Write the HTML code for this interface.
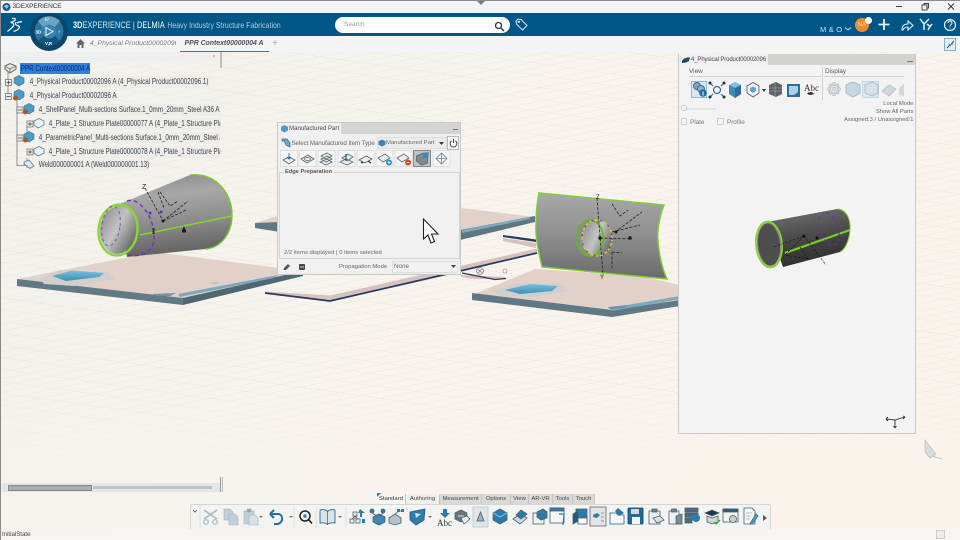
<!DOCTYPE html>
<html><head><meta charset="utf-8"><style>
*{box-sizing:border-box}
html,body{margin:0;padding:0;width:960px;height:540px;overflow:hidden;background:#f6f2ec;font-family:"Liberation Sans",sans-serif}
.a{position:absolute;white-space:nowrap}
.t{font-size:8px;color:#3c4146;line-height:12px;background:#eeedea;padding:0 1px;height:12px;overflow:hidden;transform:scaleX(.78);transform-origin:0 0}
.panel{position:absolute;background:#f0f0f0;border:1px solid #c8c8c8}
.gt{font-size:6.4px;color:#555}
.tab{position:absolute;top:493.500px;height:10.500px;font-size:5.900px;line-height:11px;text-align:center;color:#444;background:#d9d9d7;border-right:1px solid #c4c4c4}
</style></head><body>
<svg class="a" style="left:0;top:0" width="960" height="540" viewBox="0 0 960 540">
<defs>
<linearGradient id="bg" x1="0" y1="0" x2="1" y2="0.4"><stop offset="0" stop-color="#f3f2ed"/><stop offset=".5" stop-color="#f7f3ed"/><stop offset="1" stop-color="#f9f3ec"/></linearGradient>
<linearGradient id="cone" x1="0.35" y1="0" x2="0.5" y2="1"><stop offset="0" stop-color="#8d8d8d"/><stop offset=".25" stop-color="#a8a8a8"/><stop offset=".6" stop-color="#8b8b8b"/><stop offset="1" stop-color="#5d5d5d"/></linearGradient>
<linearGradient id="inner" x1="0" y1="0" x2="1" y2="0.6"><stop offset="0" stop-color="#858585"/><stop offset=".55" stop-color="#c4c4c4"/><stop offset="1" stop-color="#707070"/></linearGradient>
<linearGradient id="pl" x1="0" y1="0" x2="0" y2="1"><stop offset="0" stop-color="#a9a9a9"/><stop offset=".5" stop-color="#8e8e8e"/><stop offset="1" stop-color="#6b6b6b"/></linearGradient>
<linearGradient id="dark" x1="0.3" y1="0" x2="0.55" y2="1"><stop offset="0" stop-color="#6f6f6f"/><stop offset=".55" stop-color="#454545"/><stop offset="1" stop-color="#2c2c2c"/></linearGradient>
<linearGradient id="blue" x1="0" y1="0" x2="0" y2="1"><stop offset="0" stop-color="#79c0dc"/><stop offset="1" stop-color="#3d8fb3"/></linearGradient>
<pattern id="grid" width="80" height="140" patternUnits="userSpaceOnUse" patternTransform="matrix(1 .14 1 -.2 0 250)">
<path d="M20 0V140M40 0V140M60 0V140M0 35H80M0 70H80M0 105H80" stroke="#e6e3dc" stroke-width=".8" fill="none"/>
<path d="M0 0V140M0 0H80" stroke="#d6d3c9" stroke-width="1" fill="none"/>
</pattern>
<linearGradient id="fade" x1="0" y1="0" x2="0" y2="1"><stop offset="0" stop-color="#fff"/><stop offset=".72" stop-color="#fff"/><stop offset=".88" stop-color="#000"/></linearGradient>
<mask id="m"><rect width="960" height="540" fill="url(#fade)"/></mask>
</defs>
<rect width="960" height="540" fill="url(#bg)"/>
<rect width="960" height="540" fill="url(#grid)" mask="url(#m)"/>
<!-- left plate -->
<path d="M155 252L17 279L17 284L183 303L303 276L303 271Z" fill="#e1d1c9"/>
<path d="M17 279L17 286L183 305L183 298Z" fill="#617a85"/>
<path d="M183 298L303 271L303 276L183 305Z" fill="#4e6773"/>
<path d="M40 279L60 270L108 272L115 279L74 286L44 284Z" fill="#cfcfcd"/>
<path d="M52 276L72 270.500L104 273L99 277L66 281Z" fill="url(#blue)"/>
<path d="M178 294L278 275L274 278L180 297Z" fill="#7aa9bd"/>
<path d="M153 294L176 293L170 296L156 296Z" fill="#6c93a8"/>
<path d="M208 283L220 282L216 284Z" fill="#a9bcc2"/>
<!-- rear plate stub -->
<path d="M255 223L280 219L280 232L255 228Z" fill="#607985"/>
<path d="M255 223L280 215L280 222Z" fill="#e1d1c9"/>
<!-- mid plate -->
<path d="M460 208L535 217L460 231Z" fill="#e1d1c9"/>
<path d="M460 230L535 216L535 222L460 240Z" fill="#5d7681"/>
<path d="M462 230L530 217L530 219L462 233Z" fill="#7daabf"/>
<!-- connectors -->
<path d="M265 291.500L330 295.500L445 269.500L537 248.500L537 253L445 274L330 300L265 293Z" fill="#d6c1bf"/>
<path d="M265 293L330 301L445 274.500L537 253" fill="none" stroke="#28385f" stroke-width="1.700"/>
<path d="M503 238L536 243L536 248L503 241Z" fill="#d6c1bf"/>
<path d="M503 237L536 242L536 239.500L503 235Z" fill="#28385f"/>
<path d="M461 275L505 277L505 279L475 279L461 277Z" fill="#d6c1bf"/>
<path d="M462 273L495 279.500L506 278.500" stroke="#28385f" stroke-width="1.300" fill="none"/>
<circle cx="480" cy="271" r="3.500" fill="#eee" stroke="#888" stroke-width=".8"/><path d="M478 269L482 273M482 269L478 273" stroke="#777" stroke-width=".6"/>
<circle cx="505" cy="271" r="2" fill="#fff" stroke="#777" stroke-width=".6"/>
<!-- right plate -->
<path d="M535 269L472 295L472 300L612 314L680 303L680 285L640 276Z" fill="#e1d1c9"/>
<path d="M472 293L472 300L612 317L680 306L680 300L612 310Z" fill="#5f7883"/>
<path d="M494 291L520 283L560 284L570 291L530 297L500 296Z" fill="#cfcfcd"/>
<path d="M505 290L530 284L558 286L552 291L520 294Z" fill="url(#blue)"/>
<path d="M610 308L680 296L680 299L612 311Z" fill="#7aa9bd"/>
<path d="M608 307L628 305L624 308L610 309Z" fill="#6c93a8"/>
<!-- cone -->
<path d="M117 205L190 175C212 172 232 190 232 215C232 232 222 248 205 249L127 257Z" fill="url(#cone)"/>
<ellipse cx="118" cy="230" rx="18" ry="24" fill="url(#inner)" transform="rotate(6 118 230)"/>
<ellipse cx="118" cy="230" rx="19.500" ry="25.500" fill="none" stroke="#87d830" stroke-width="2.400" transform="rotate(6 118 230)"/>
<path d="M190 175C212 172 232 190 232 215C232 232 222 248 205 249" fill="none" stroke="#78c828" stroke-width="1.400"/>
<path d="M140 235L232 216" stroke="#86d42c" stroke-width="1.500"/>
<path d="M127 201C140 196 156 220 154 240C153 252 140 258 128 255" fill="none" stroke="#6d2bc0" stroke-width="1.300" stroke-dasharray="4 3"/>
<ellipse cx="111" cy="226" rx="9" ry="20" fill="none" stroke="#7d4bc8" stroke-width="1" stroke-dasharray="3 3" transform="rotate(8 111 226)"/>
<g stroke="#222" fill="none" stroke-width=".8" stroke-dasharray="3 1.500"><path d="M145 188L163 221M163 221L188 201M163 221L186 210M158 192L164 208M160 192L170 206L178 201"/></g>
<g fill="#1a1a1a"><circle cx="163" cy="221" r="1.500"/><path d="M182 231l2-5 2 5z"/><rect x="182" y="230" width="4" height="2.500"/><rect x="152.500" y="228" width="2" height="6" fill="#333"/></g>
<circle cx="150" cy="213" r="1.500" fill="#6d2bc0"/><circle cx="161" cy="212" r="1.500" fill="#6d2bc0"/>
<text x="142" y="189" font-size="7" font-family="Liberation Sans" fill="#222">Z</text>
<!-- panel tube -->
<path d="M539 193L664 205C659 218 657 232 658 240C659 255 662 268 667 279L542 267C538 250 535 235 536 223C536 212 537 203 539 193Z" fill="url(#pl)" stroke="#7ed030" stroke-width="1.400"/>
<ellipse cx="595" cy="238" rx="18" ry="18.500" fill="#8c8c8c"/>
<ellipse cx="597" cy="238" rx="15" ry="18" fill="url(#inner)"/>
<ellipse cx="590" cy="238" rx="13" ry="18" fill="none" stroke="#63ba1e" stroke-width="1.800"/>
<ellipse cx="597" cy="238" rx="15" ry="18" fill="none" stroke="#d6c83c" stroke-width="1.600" stroke-dasharray="3 2"/>
<ellipse cx="597" cy="238" rx="15" ry="18" fill="none" stroke="#6d2bc0" stroke-width="1.200" stroke-dasharray="2 7"/>
<g stroke="#222" fill="none" stroke-width=".8" stroke-dasharray="3 1.500"><path d="M597 198L603 275M600 238L632 239M615 232L642 212M612 204L620 216L628 210M612 232L640 225M612 252L622 253M612 252L612 268"/></g>
<g fill="#1a1a1a"><circle cx="600" cy="238" r="1.700"/><circle cx="630" cy="238" r="1.700"/><circle cx="616" cy="232" r="1.500"/></g>
<text x="596" y="199" font-size="6" fill="#222" font-family="Liberation Sans">Z</text><text x="600" y="279" font-size="6" fill="#222" font-family="Liberation Sans">Y</text>
<!-- misc at far right -->
<path d="M925 440L936 454L930 458L925 452Z" fill="#d8dcdc" stroke="#aeb4b4" stroke-width=".6"/><path d="M932 456L942 459" stroke="#c0c4c4"/>
</svg>

<!-- Title bar -->
<div class="a" style="left:0;top:0;width:960px;height:13px;background:#f1f5f9;border-top:1px solid #8a8a8a"></div>
<svg class="a" style="left:2px;top:2px" width="9" height="10"><circle cx="4.500" cy="5" r="4" fill="#1d5a86"/><path d="M2 4l2.500-1.500L7 4 4.500 7z" fill="#8fc6e2"/></svg>
<div class="a" style="left:12.500px;top:3px;font-size:6.500px;line-height:8px;color:#333;letter-spacing:-.1px">3DEXPERIENCE</div>
<svg class="a" style="left:476px;top:0" width="10" height="5"><path d="M1 1h8L5 5z" fill="#7d7d7d"/></svg>
<svg class="a" style="left:895px;top:2px" width="60" height="10" fill="none" stroke="#333" stroke-width=".9"><path d="M1 4.500H7"/><rect x="27" y="3" width="5" height="5"/><path d="M29 3V1.500H33.500V6H32"/><path d="M53 1.500L59 7.500M59 1.500L53 7.500"/></svg>

<!-- Blue bar -->
<div class="a" style="left:0;top:13px;width:960px;height:23px;background:#005685"></div>
<svg class="a" style="left:6px;top:16px" width="18" height="18" fill="none" stroke="#fff" stroke-width="1.200"><path d="M6 2.500C8 2 10 2.500 9 4C8 5.500 6 6 4.500 6.500C7.500 6.500 8.500 8.500 7 10.500C5.500 12.500 3 14 1.500 15.500"/><path d="M10 6C9 8 9.500 9 11.500 9.500C13.500 10 14 11.500 12.500 13C11 14.500 9 15 7.500 15.500"/><path d="M11 7C12.500 6 14.500 5.500 16 6"/></svg>
<div class="a" style="left:73px;top:20px;font-size:8.800px;line-height:11px;color:#dbe9f1;letter-spacing:.1px;transform:scaleX(.835);transform-origin:0 0"><b style="color:#fff">3D</b>EXPERIENCE | <span style="color:#fff">DELMIA</span> <span style="color:#b5d2e2;font-size:8.200px;letter-spacing:.08px;margin-left:1px">Heavy Industry Structure Fabrication</span></div>
<div class="a" style="left:335px;top:17px;width:175px;height:16px;background:#fff;border-radius:8px"></div>
<div class="a" style="left:344px;top:21px;font-size:6.500px;line-height:8px;color:#9b9b9b">Search</div>
<svg class="a" style="left:494px;top:21px" width="11" height="11" fill="none" stroke="#333" stroke-width="1.300"><circle cx="4.500" cy="4.500" r="3"/><path d="M7 7L10 10"/></svg>
<svg class="a" style="left:515px;top:18px" width="13" height="13" fill="none" stroke="#d7e8f2" stroke-width="1"><path d="M1 3L3 1L6 1.500L12 7.500L7.500 12L1.500 6Z"/><circle cx="3.800" cy="3.800" r=".7"/></svg>
<div class="a" style="left:820px;top:25px;font-size:7.500px;line-height:9px;color:#cfe2ee;letter-spacing:.2px">M &amp; O</div>
<svg class="a" style="left:844px;top:26px" width="8" height="6" fill="none" stroke="#cfe2ee"><path d="M1 1.500L4 4L7 1.500"/></svg>
<div class="a" style="left:855px;top:18px;width:14px;height:14px;border-radius:7px;background:#f08a2c;color:#fbe0c0;font-size:5.500px;line-height:14px;text-align:center">NA</div>
<div class="a" style="left:865px;top:17px;width:7px;height:7px;border-radius:4px;background:#fff"></div>
<svg class="a" style="left:876px;top:15px" width="84" height="20" fill="none" stroke="#e6f0f6"><path d="M8 4V15M2.500 9.500H13.500" stroke-width="1.800"/><path d="M26 15c0-4 2-6 6-6V6l5 4.500-5 4.500v-3c-2 0-4 1-5 3z" stroke-width="1.100"/><path d="M44 4l4 5v6M53 4l-5 5M51 9l3 2.500L52 15M56 9l-2 2.500" stroke-width="1.500"/><circle cx="74" cy="10" r="5.500" stroke-width="1.200"/><path d="M72 8c0-2.500 4-2.500 4 0 0 1.500-2 1.500-2 3.500M74 12.500v1" stroke-width="1"/></svg>

<!-- Tab bar -->
<div class="a" style="left:0;top:36px;width:960px;height:16px;background:#f3f4f6"></div>
<svg class="a" style="left:75px;top:38px" width="11" height="11"><path d="M5.500 1L1 5.500H2.500V10H4.500V7H6.500V10H8.500V5.500H10Z" fill="#666"/></svg>
<div class="a" style="left:90px;top:39px;width:86px;font-size:6.800px;line-height:10px;font-style:italic;color:#7a7d80;overflow:hidden">4_Physical Product00002096</div>
<div class="a" style="left:184.500px;top:39px;font-size:6.900px;line-height:10px;font-style:italic;font-weight:bold;color:#4c5257">PPR Context00000004 A</div>
<div class="a" style="left:180px;top:50.500px;width:88.500px;height:1.500px;background:#2b79a8"></div>
<div class="a" style="left:272px;top:38px;font-size:10px;line-height:11px;color:#a8a8a8">+</div>
<div class="a" style="left:944px;top:38px;width:12px;height:13px;background:#e2eef5;border:1px solid #86afc6"></div>
<svg class="a" style="left:946px;top:40px" width="9" height="9" stroke="#1a5f8a" fill="#1a5f8a" stroke-width="1"><path d="M1 8L3.500 5.500M8 1L5.500 3.500"/><path d="M2.500 4.500L4.500 4.500L4.500 6.500ZM6.500 2.500L4.500 4.500L6.500 4.500Z" stroke-width=".3"/></svg>

<!-- Compass -->
<svg class="a" style="left:30px;top:13px" width="38" height="38"><circle cx="19" cy="19" r="19" fill="#0c4668"/><circle cx="19" cy="18" r="14.500" fill="#2a76a2"/><path d="M8 8A15 15 0 0 1 30 8L24 15A8 8 0 0 0 14 15Z" fill="#6ba3c3"/><path d="M8 28L14 22A8 8 0 0 0 24 22L30 28A15 15 0 0 1 8 28Z" fill="#14547c"/><circle cx="19" cy="18.500" r="7" fill="#3a84ae"/><path d="M16 14.500L23 18.500L16 22.500Z" fill="none" stroke="#f2f8fb" stroke-width="1"/><text x="5.500" y="20.500" font-size="4.500" fill="#fff" font-family="Liberation Sans" font-weight="bold">3D</text><text x="28.500" y="20.500" font-size="4.500" fill="#fff" font-family="Liberation Sans">i'</text><text x="15" y="8" font-size="4.500" fill="#fff" font-family="Liberation Sans">f//</text><text x="15" y="32" font-size="4.500" fill="#fff" font-family="Liberation Sans" font-weight="bold">V,R</text></svg>

<!-- Tree -->
<div class="a" style="left:0;top:52px;width:220px;height:9px;background:#efefef"></div>
<div class="a" style="left:213px;top:54px;font-size:6px;line-height:6px;color:#666">‹</div>
<div class="a" style="left:220px;top:52px;width:1.500px;height:16px;background:#bdbdbd"></div>
<svg class="a" style="left:3px;top:62px" width="50" height="112" fill="none"><path d="M5 10V35M14 36V58M14 43V103.500H24M24 64V80M24 96V106" stroke="#777" stroke-width=".8"/>
<g stroke="#666" stroke-width=".7" fill="#eee"><rect x="2.500" y="17.500" width="6" height="6"/><rect x="2.500" y="31.500" width="6" height="6"/><rect x="14" y="45" width="6" height="6"/><rect x="24" y="59" width="6" height="6"/><rect x="14" y="73" width="6" height="6"/><rect x="24" y="87" width="6" height="6"/></g>
<path d="M3.500 20.500h4M5.500 18.500v4M3.500 34.500h4M15 48h4M25 62h4M27 60v4M15 76h4M25 90h4M27 88v4" stroke="#333" stroke-width=".7"/></svg>
<svg class="a" style="left:3px;top:62px" width="15" height="13"><path d="M2 4L7 1.500L13 4V7L7 11L2 7Z" fill="#e8e8e8" stroke="#666"/><path d="M2 4L7 7L13 4M7 7V11" stroke="#888" fill="none"/></svg>
<svg class="a" style="left:0;top:0;overflow:visible" width="50" height="180"><path d="M14 78L19 75.500L24 78V83L19 86L14 83Z" fill="#4a9cc9" stroke="#39708e" stroke-width=".6"/><path d="M14 92L19 89.500L24 92V97L19 100L14 97Z" fill="#4a9cc9" stroke="#39708e" stroke-width=".6"/><circle cx="15.500" cy="98" r="2.500" fill="#b5521e"/><path d="M24 106L29 103.500L34 106V111L29 114L24 111Z" fill="#4a9cc9" stroke="#39708e" stroke-width=".6"/><circle cx="25.500" cy="112" r="2.500" fill="#b5521e"/><path d="M24 134L29 131.500L34 134V139L29 142L24 139Z" fill="#4a9cc9" stroke="#39708e" stroke-width=".6"/><circle cx="25.500" cy="140" r="2.500" fill="#b5521e"/><path d="M34 121L39 118.500L44 121V125L38 128L34 125Z" fill="#eef2f4" stroke="#5b7f92" stroke-width=".8"/><path d="M34 149L39 146.500L44 149V153L38 156L34 153Z" fill="#eef2f4" stroke="#5b7f92" stroke-width=".8"/><path d="M24 162L29 160L34 166L30 168.500L24 164Z" fill="#dfe9ef" stroke="#5b7f92" stroke-width=".8"/></svg>
<div class="a" style="left:20px;top:63px;width:69.500px;height:11px;background:#2f7fe0"></div>
<div class="a t" style="left:20px;top:62.500px;color:#07275a;background:none">PPR Context00000004 A</div>
<div class="a t" style="left:28.500px;top:76px">4_Physical Product00002096 A (4_Physical Product00002096.1)</div>
<div class="a t" style="left:28.500px;top:90px">4_Physical Product00002096 A</div>
<div class="a t" style="left:38px;top:104px">4_ShellPanel_Multi-sections Surface.1_0mm_20mm_Steel A36 A</div>
<div class="a t" style="left:47.500px;top:118px;width:221px">4_Plate_1 Structure Plate00000077 A (4_Plate_1 Structure Plate00000077.1)</div>
<div class="a t" style="left:38px;top:132px;width:233px">4_ParametricPanel_Multi-sections Surface.1_0mm_20mm_Steel A36 A</div>
<div class="a t" style="left:47.500px;top:146px;width:221px">4_Plate_1 Structure Plate00000078 A (4_Plate_1 Structure Plate00000078.1)</div>
<div class="a t" style="left:38px;top:159px">Weld000000001 A (Weld000000001.13)</div>

<!-- Manufactured Part panel -->
<div class="panel" style="left:277px;top:122px;width:184px;height:153px"></div>
<div class="a" style="left:278px;top:123px;width:182px;height:11px;background:#d4d4d2"></div>
<div class="a" style="left:278px;top:123px;width:63px;height:11px;background:#f0f0f0"></div>
<svg class="a" style="left:280px;top:124px" width="9" height="9"><path d="M4.500 1L8 2.800V6.500L4.500 8.500L1 6.500V2.800Z" fill="#4a9cc9"/></svg>
<div class="a" style="left:289px;top:124px;font-size:6.100px;line-height:9px;color:#444">Manufactured Part</div>
<div class="a" style="left:453px;top:129px;width:5px;height:1px;background:#777"></div>
<svg class="a" style="left:281px;top:137px" width="10" height="11"><path d="M1 2H6L9 6V10L5 8L3 4H1Z" fill="#6fa8c9" stroke="#2b6a90" stroke-width=".7"/></svg>
<div class="a" style="left:291.500px;top:138.500px;font-size:6.200px;line-height:9px;color:#666;letter-spacing:-.08px">Select Manufactured Item Type</div>
<div class="a" style="left:377px;top:137px;width:70px;height:11.500px;background:#ececec;border:1px solid #ddd"></div>
<svg class="a" style="left:378px;top:139px" width="8" height="8"><path d="M4 .5L7.500 2.300V5.800L4 7.500L.5 5.800V2.300Z" fill="#3a85ae"/></svg>
<div class="a" style="left:386px;top:139px;font-size:5.900px;line-height:8px;color:#666">Manufactured Part</div>
<svg class="a" style="left:439px;top:142px" width="5" height="3"><path d="M0 0H5L2.500 3Z" fill="#333"/></svg>
<div class="a" style="left:447px;top:136px;width:12px;height:14px;background:#f5f5f5;border:1px solid #bbb"></div>
<svg class="a" style="left:449px;top:138px" width="9" height="10" fill="none" stroke="#444"><path d="M2.500 2.800A3.400 3.400 0 1 0 6.500 2.800M4.500 1V5"/></svg>

<svg class="a" style="left:280px;top:150px" width="172" height="18">
<g fill="#f5f5f5" stroke="#d6d6d6" stroke-width=".7"><rect x=".5" y=".5" width="17" height="16"/><rect x="19" y=".5" width="17" height="16"/><rect x="38" y=".5" width="17" height="16"/><rect x="58" y=".5" width="17" height="16"/><rect x="77" y=".5" width="17" height="16"/><rect x="96" y=".5" width="17" height="16"/><rect x="115" y=".5" width="17" height="16"/><rect x="133.500" y=".5" width="17" height="16" fill="#bfc2c4" stroke="#666"/><rect x="153" y=".5" width="17" height="16"/></g>
<g stroke="#56646c" stroke-width=".8" fill="#e9eded"><path d="M3 10L9 7L15 10L9 14Z"/><path d="M9 3V9M7 7L9 9L11 7" fill="none" stroke="#1f5c85"/><path d="M21 9L28 5L34 9L27 13Z"/><ellipse cx="27.500" cy="9" rx="3" ry="1.500"/><path d="M40 12L47 9L52 12L46 15ZM41 9L47 6L52 9L46 12ZM41 6L47 3L52 6L46 9Z"/><path d="M60 12L66 9L73 12L67 15ZM62 8L68 4L73 7L67 11Z"/><path d="M66 4V10" stroke="#1f5c85" stroke-width="1.300"/><path d="M79 10L86 6L92 9L85 13Z"/><path d="M81 12l2 1M88 11l3 2" stroke="#333" stroke-width="1.300"/><path d="M98 8L105 4L110 8L103 12Z"/><path d="M117 8L124 4L129 8L122 12Z"/><path d="M136.500 6L143.500 3L147.500 7V13L141.500 15L136.500 11Z" fill="#7d8a90"/><path d="M142.500 3L148.500 2V7L143.500 8Z" fill="#3d89b3" stroke="none"/><path d="M156 8.500L161.500 3L167 8.500L161.500 14Z" fill="none" stroke="#5b8ba8"/><path d="M161.500 3V14M156 8.500H167" stroke="#5b8ba8"/></g>
<circle cx="109" cy="12.500" r="3" fill="#2d8ec8"/><path d="M107.500 12.500h3M109 11v3" stroke="#fff" stroke-width=".7"/><circle cx="128" cy="12.500" r="3" fill="#e0441f"/><path d="M126.500 12.500h3" stroke="#fff" stroke-width=".8"/>
</svg>

<div class="a" style="left:279px;top:171.500px;width:181px;height:87px;border:1px solid #d4d4d4;background:#f0f0f0"></div>
<div class="a" style="left:284px;top:168px;padding:0 1px;background:#f0f0f0;font-size:5.700px;line-height:9px;font-weight:bold;color:#555">Edge Preparation</div>
<div class="a" style="left:284px;top:248.500px;font-size:5.900px;line-height:9px;color:#666">2/2 items displayed | 0 items selected</div>
<svg class="a" style="left:422px;top:218px" width="18" height="27"><path d="M1.500 1V21L6 17L9 25L12.500 23.500L9.500 16H16Z" fill="#fff" stroke="#222" stroke-width="1.100"/></svg>
<svg class="a" style="left:282px;top:262px" width="26" height="10"><path d="M1.500 8L2 6L6 2L8 4L4 8Z" fill="#555"/><rect x="17" y="2" width="6" height="6" rx="1" fill="#444"/><rect x="18" y="4.500" width="4" height="1" fill="#ddd"/></svg>
<div class="a" style="left:339px;top:263px;font-size:5.900px;line-height:9px;color:#666">Propagation Mode</div>
<div class="a" style="left:392px;top:260.500px;width:66px;height:12px;background:#f2f2f2;border:1px solid #ddd"></div>
<div class="a" style="left:394px;top:262.500px;font-size:6.300px;line-height:8px;color:#666">None</div>
<svg class="a" style="left:451px;top:265px" width="5" height="3"><path d="M0 0H5L2.500 3Z" fill="#444"/></svg>

<!-- Right panel -->
<div class="panel" style="left:677.500px;top:53.500px;width:238px;height:380px;background:#f3f3f3"></div>
<div class="a" style="left:678.500px;top:54px;width:236px;height:11px;background:#d2d2d0"></div>
<div class="a" style="left:678.500px;top:54px;width:89px;height:11px;background:#f0f0f0"></div>
<svg class="a" style="left:681px;top:56px" width="10" height="8"><path d="M1 5C2 2 7 1 9 1.500L8 5C6 6.500 3 7 1 7Z" fill="#234d6c"/></svg>
<div class="a" style="left:691px;top:55.500px;font-size:6.000px;line-height:9px;color:#444;letter-spacing:-.12px">4_Physical Product00002096</div>
<div class="a" style="left:907px;top:60.500px;width:6px;height:1px;background:#777"></div>
<div class="a gt" style="left:689px;top:67.500px;line-height:8px">View</div>
<div class="a gt" style="left:825px;top:67.500px;line-height:8px">Display</div>
<div class="a" style="left:689px;top:76px;width:132px;height:1px;background:#cfcfcf"></div>
<div class="a" style="left:824px;top:76px;width:80px;height:1px;background:#cfcfcf"></div>
<div class="a" style="left:822px;top:67px;width:1px;height:33px;background:#cfcfcf"></div>
<div class="a" style="left:691px;top:81px;width:16px;height:17px;background:#d9e8f2;border:1px solid #8fb8d2"></div>
<div class="a" style="left:862px;top:81px;width:17px;height:17px;background:#dfeaf0;border:1px solid #c6d6e0"></div>
<svg class="a" style="left:690px;top:79px" width="214" height="22">
<circle cx="7" cy="7" r="3.500" fill="#7fa7bd" stroke="#3e6d88"/><circle cx="11" cy="10" r="3.500" fill="#8fb4c8" stroke="#3e6d88"/><circle cx="13" cy="14" r="3.800" fill="#1d6fa3"/><rect x="12.500" y="12.500" width="1" height="4" fill="#fff"/>
<g stroke="#2d6f95" stroke-width="1.200" fill="none"><circle cx="27" cy="11" r="3.500"/><path d="M23 7L20 4M31 7L34 4M23 15L20 18M31 15L34 18"/></g><g fill="#24353f"><circle cx="20" cy="4" r="1.500"/><circle cx="34" cy="4" r="1.500"/><circle cx="20" cy="18" r="1.500"/><circle cx="34" cy="18" r="1.500"/></g>
<path d="M39 6L45 3L51 6V15L45 19L39 15Z" fill="#3d8ab6"/><path d="M39 6L45 9L51 6L45 3Z" fill="#7cc0df"/><path d="M45 9V19L51 15V6Z" fill="#2c6e97"/>
<path d="M57 7L63 3.500L69 7V14L63 18L57 14Z" fill="#eef2f4" stroke="#555" stroke-width=".8"/><path d="M60 9L63 7.500L66 9V12L63 14L60 12Z" fill="#5ca7cf"/><path d="M72 10H76L74 13Z" fill="#333"/>
<path d="M79 6L86 3L92 6V15L86 18L79 15Z" fill="#5d6468"/><path d="M79 9L92 9M79 12L92 12M85 3V18" stroke="#9aa" stroke-width=".6"/>
<rect x="97" y="5" width="13" height="13" fill="#2e6e97"/><path d="M99 7H108V13L104 16H99Z" fill="#a8d2e7"/>
<text x="114" y="12" font-size="9" fill="#333" font-family="Liberation Serif">Abc</text><path d="M117 14.500C119 12.500 122 12.500 124 14.500C122 16.500 119 16.500 117 14.500Z" fill="#333"/>
<g opacity=".75"><g fill="#c9d6dc" stroke="#9eb0b9" stroke-width=".7"><circle cx="144" cy="10" r="2"/><circle cx="139" cy="10" r="1.500"/><circle cx="149" cy="10" r="1.500"/><circle cx="144" cy="5" r="1.500"/><circle cx="144" cy="15" r="1.500"/><circle cx="140.500" cy="6.500" r="1.500"/><circle cx="147.500" cy="6.500" r="1.500"/><circle cx="140.500" cy="13.500" r="1.500"/><circle cx="147.500" cy="13.500" r="1.500"/></g>
<path d="M156 6L163 3L170 6V14L163 18L156 14Z" fill="#bad0dc" stroke="#91a5b0"/><path d="M175 6L182 3L188 6V14L182 17L175 14Z" fill="#d8dfe3" stroke="#a0aeb6"/><path d="M192 12L199 6L206 10L199 17Z" fill="#c4cfd5" stroke="#a9b5bb"/><path d="M209 9L214 5V17L209 16Z" fill="#c4cfd5"/></g>
</svg>
<div class="a" style="left:683px;top:108px;width:33px;height:2px;background:#e2e2e2"></div>
<div class="a" style="left:680.500px;top:105px;width:6px;height:6px;border-radius:3px;background:#f5f5f5;border:1px solid #c9c9c9"></div>
<div class="a" style="left:680.500px;top:118px;width:6.500px;height:6.500px;background:#f3f3f3;border:1px solid #d0d0d0"></div>
<div class="a" style="left:690px;top:118.500px;font-size:6.300px;line-height:8px;color:#777">Plate</div>
<div class="a" style="left:717px;top:118px;width:6.500px;height:6.500px;background:#f3f3f3;border:1px solid #d0d0d0"></div>
<div class="a" style="left:727px;top:118.500px;font-size:6.300px;line-height:8px;color:#777">Profile</div>
<div class="a" style="right:46.500px;top:100px;font-size:5.850px;line-height:8px;color:#666">Local Mode</div>
<div class="a" style="right:46.500px;top:108px;font-size:5.850px;line-height:8px;color:#666">Show All Parts</div>
<div class="a" style="right:46.500px;top:116px;font-size:5.850px;line-height:8px;color:#666">Assigned:3 / Unassigned:1</div>
<svg class="a" style="left:740px;top:195px" width="125" height="85">
<path d="M27 27L97 14C106 14 111 24 110 35C109 48 104 55 100 57L43 72Z" fill="url(#dark)"/>
<ellipse cx="29" cy="49.500" rx="11.500" ry="21.500" fill="#4e4e4e" stroke="#8f8f8f" stroke-width="1" transform="rotate(-5 29 49.500)"/>
<ellipse cx="29" cy="49.500" rx="13" ry="23" fill="none" stroke="#84d42c" stroke-width="1.800" transform="rotate(-5 29 49.500)"/>
<path d="M45 58L110 35" stroke="#7fd01e" stroke-width="2"/>
<ellipse cx="89" cy="34" rx="9" ry="17" fill="none" stroke="#6a2bbd" stroke-width="1.200" stroke-dasharray="3 3" transform="rotate(-18 89 34)"/>
<path d="M97 14C106 14 111 24 110 35C109 48 104 55 100 57" fill="none" stroke="#84d42c" stroke-width="1"/>
<g stroke="#111" stroke-width=".6" stroke-dasharray="2.500 1.500" fill="none"><path d="M34 52L64 41L86 70M64 41L45 60L68 64M60 52L68 64"/></g>
<circle cx="64" cy="41" r="1.500" fill="#111"/><circle cx="77" cy="43" r="1.500" fill="#111"/>
</svg>
<svg class="a" style="left:885px;top:413px" width="22" height="16" fill="none" stroke="#333" stroke-width=".9"><path d="M1 6L10 7L20 4M10 7V15"/><path d="M1 6L3 4M1 6L3 8M20 4L18 3M20 4L18 6M10 15L8.500 13M10 15L11.500 13"/></svg>

<!-- horizontal scrollbar -->
<div class="a" style="left:2px;top:483px;width:218px;height:9px;background:#e4e6e6"></div>
<div class="a" style="left:8px;top:485px;width:84px;height:5.500px;background:#adadad;border:1px solid #858585"></div>
<div class="a" style="left:93px;top:486px;width:119px;height:3px;background:#c0c2c2"></div>
<div class="a" style="left:220px;top:477px;width:1px;height:15px;background:#999"></div>
<div class="a" style="left:222px;top:477px;width:1px;height:15px;background:#bbb"></div>

<!-- Action bar tabs -->
<div class="tab" style="left:377px;width:29px;background:#f5f5f3;color:#333">Standard</div>
<div class="tab" style="left:406px;width:34px;background:#efefed">Authoring</div>
<div class="tab" style="left:440px;width:42px">Measurement</div>
<div class="tab" style="left:482px;width:29px">Options</div>
<div class="tab" style="left:511px;width:18px">View</div>
<div class="tab" style="left:529px;width:24px">AR-VR</div>
<div class="tab" style="left:553px;width:20px">Tools</div>
<div class="tab" style="left:573px;width:22px">Touch</div>
<svg class="a" style="left:377px;top:493px" width="5" height="5"><path d="M0 0H4L0 4Z" fill="#2b79a8"/></svg>
<div class="a" style="left:190px;top:504px;width:581px;height:25px;background:#f3f3f1;border:1px solid #d6d6d4;border-bottom:0;border-radius:2px 2px 0 0"></div>
<svg class="a" style="left:192px;top:505px" width="579" height="24">
<path d="M1 5l2 2 2-2" fill="none" stroke="#555" stroke-width=".8"/>
<path d="M8 1V23M102 1V23M124 1V23M154 1V23" stroke="#dcdcdc"/>
<g transform="translate(11 4)" fill="none" stroke="#a4b8c3"><path d="M1 1L14 10M1 10L14 1" stroke-width="1.600"/><circle cx="3" cy="13" r="2.300" stroke-width="1.200"/><circle cx="12" cy="13" r="2.300" stroke-width="1.200"/></g>
<g transform="translate(31 4)" fill="#c1d0d8" stroke="#9eb2bc" stroke-width=".6"><path d="M1 0H7L10 3V11H1Z"/><path d="M6 5H12L15 8V16H6Z"/></g>
<g transform="translate(51 4)" fill="#c1d0d8" stroke="#9eb2bc" stroke-width=".6"><path d="M1 2H11V15H1Z"/><rect x="4" y="0" width="4" height="3" fill="#93a6b0"/><path d="M6 6H12L15 9V16H6Z" fill="#d7e1e6"/></g>
<path d="M67 11l2 2 2-2z" fill="#777"/>
<g transform="translate(77 4)" fill="none" stroke="#1e6ea5" stroke-width="2"><path d="M1 5H9C14 5 15 13 9 15H5M1 5L5 1M1 5L5 9"/></g>
<path d="M97 11l2 2 2-2z" fill="#777"/>
<g transform="translate(106 4)"><circle cx="7" cy="7" r="5" fill="#f6f6f6" stroke="#222" stroke-width="1.500"/><circle cx="7" cy="7" r="1.800" fill="#2a86b8"/><path d="M11 11L14 14.500" stroke="#222" stroke-width="1.600"/></g>
<g transform="translate(128 4)"><path d="M0 1C4 0 6 1 7.500 2.500C9 1 11 0 15 1V14C11 13.500 9 14 7.500 15.500C6 14 4 13.500 0 14Z" fill="#d8e4ea" stroke="#2e6a8c" stroke-width=".9"/><path d="M7.500 2.500V15.500" stroke="#2e6a8c" stroke-width=".7"/></g>
<path d="M146 11l2 2 2-2z" fill="#777"/>
<g stroke="#4d5e68" stroke-width=".8" fill="#eef1f3">
<g transform="translate(158 4)"><rect x="0" y="10" width="4" height="4"/><rect x="6" y="10" width="4" height="4"/><rect x="3" y="3" width="4" height="4"/><path d="M5 7V10M2 10L5 7L8 10" fill="none"/><path d="M10 0L15 4H12V8H10V4H8Z" fill="#2b7cad" stroke="none"/><path d="M12 10H15V14H12Z" fill="#2b7cad" stroke="none"/></g>
<g transform="translate(178 4)"><path d="M3 8L9 5L15 8V13L9 16L3 13Z" fill="#3d89b3"/><circle cx="2" cy="2" r="2" fill="#2b7cad"/><circle cx="13" cy="2" r="2" fill="#2b7cad"/><path d="M2 4L7 7M13 4L10 7" fill="none"/></g>
<g transform="translate(196 4)"><path d="M1 9L7 5L13 9V14L7 16L1 14Z" fill="#b4c2c9"/><rect x="9" y="0" width="3" height="3" fill="#2b7cad" stroke="none"/><rect x="13" y="0" width="3" height="3" fill="#2b7cad" stroke="none"/><path d="M7 5L11 2M11 2H14" fill="none" stroke="#2b7cad"/></g>
<g transform="translate(218 4)"><path d="M0 3L15 0L14 11L6 16L0 11Z" fill="#2f7cab" stroke="#1e5a80"/><path d="M5 4L11 5L6 9Z" fill="#cfe6f1" stroke="none"/></g><path d="M236 11l2 2 2-2z" fill="#777" stroke="none"/>
<g transform="translate(245 3)"><path d="M6 1H10V5H13L8 10L3 5H6Z" fill="#2b7cad" stroke="none"/><text x="0" y="18" font-size="9" fill="#333" stroke="none" font-family="Liberation Serif">Abc</text></g>
<g transform="translate(263 4)"><path d="M0 4L6 1L12 4V10L6 13L0 10Z" fill="#657880"/><path d="M6 9L12 7L15 10L9 15Z"/><path d="M3 7H9" stroke="#fff"/></g>
<g transform="translate(281 2)"><rect x="0" y="0" width="15" height="20" fill="#dce6eb" stroke="#bbc9d1"/><path d="M4 14L7.500 5L11 14Z" fill="#9cb1bc"/></g>
<g transform="translate(301 4)"><path d="M0 4L7 0L14 4V11L7 15L0 11Z" fill="#2b7cad"/><path d="M0 4L7 8L14 4" fill="none" stroke="#9ccbe2"/></g>
<g transform="translate(321 4)"><path d="M0 10L7 5L14 9L7 15Z" fill="#cfd9de"/><path d="M3 6L8 1L14 5L8 10Z" fill="#2b7cad"/></g>
<g transform="translate(340 4)"><rect x="1" y="4" width="11" height="11" fill="#eef1f3"/><path d="M5 3L11 0L15 3V9L9 11L5 8Z" fill="#2b7cad"/></g>
<g transform="translate(358 3)"><rect x="0" y="0" width="14" height="15" fill="#f5f7f8"/><rect x="0" y="0" width="14" height="3" fill="#2b7cad"/><path d="M9 6H14L13 17" stroke="#2b7cad" fill="none" stroke-width="1.200"/></g>
<g transform="translate(381 3)"><path d="M3 1H14V14H3Z" fill="#2b7cad"/><path d="M0 6L5 3V13L0 16Z" fill="#1d5b85"/><rect x="5" y="10" width="9" height="6" fill="#fff"/></g>
<g transform="translate(398 2)"><rect x="0" y="0" width="16" height="19" fill="#e4e4e4" stroke="#666"/><path d="M3 8L7 6L10 8L7 11L3 10Z" fill="#2b7cad" stroke="none"/><path d="M11 6H14M11 10H14M11 14H14" stroke="#777"/></g>
<g transform="translate(418 3)"><path d="M0 5H6L8 7H14V16H0Z" fill="#f5f6f6" stroke="#2a5f80"/><path d="M8 0L14 5L9 8L5 3Z" fill="#2b7cad" stroke="none"/></g>
<g transform="translate(436 3)"><rect x="0" y="0" width="15" height="16" rx="1" fill="#1f6c9c" stroke="#123f5e"/><rect x="3" y="1" width="8" height="5" fill="#ccd9e0" stroke="none"/><rect x="4" y="9" width="8" height="7" fill="#f4f4f4" stroke="none"/></g>
<g transform="translate(456 3)"><path d="M1 3H12V16H1Z"/><rect x="4" y="1" width="5" height="3" fill="#6e838f"/><path d="M5 10L12 8L16 12L9 15Z" fill="#dce5ea"/></g>
<g transform="translate(476 3)"><path d="M1 3H11V16H1Z"/><rect x="3.500" y="1" width="5" height="3" fill="#6e838f"/><path d="M8 8L14 6V16L8 16Z" fill="#778d99"/></g>
<g transform="translate(493 3)"><path d="M0 0H13V4H0ZM0 5H13V9H0ZM0 10H7V15H0Z" fill="#4c6b7e"/><circle cx="11" cy="10" r="4" fill="#2b7cad" stroke="none"/></g>
<g transform="translate(513 3)"><path d="M0 5L7 2L14 5L7 8Z" fill="#1c3a4f"/><path d="M2 8L7 10L13 8V14L7 16L2 14Z" fill="#cfd7db"/><path d="M9 14L11 16L15 12" stroke="#3ea02b" stroke-width="1.300" fill="none"/></g>
<g transform="translate(531 4)"><rect x="0" y="0" width="15" height="13" fill="#f2f5f6"/><rect x="0" y="0" width="15" height="3" fill="#2d5c79"/><circle cx="10" cy="10" r="3.500" fill="#c6ced2"/></g>
<g transform="translate(551 3)"><path d="M1 0H9L12 3V16H1Z" fill="#f5f7f8"/><path d="M3 5H9M3 8H8M3 11H7" stroke="#9aa"/><path d="M8 14L13 6L15 8L10 15L7 16Z" fill="#4b9bc7" stroke="#2b6f95"/></g>
</g>
<path d="M571 10L575 13L571 16Z" fill="#555"/>
</svg>

<!-- Status bar -->
<div class="a" style="left:0;top:529px;width:960px;height:11px;background:#f6f5f2"></div>
<div class="a" style="left:2px;top:531px;font-size:6.100px;line-height:8px;color:#444">InitialState</div>
<div class="a" style="left:0;top:0;width:1px;height:540px;background:#8a8a8a"></div>
<div class="a" style="left:936px;top:530px;width:9px;height:9px;background:#eee;border:1px solid #ccc"></div>
</body></html>
